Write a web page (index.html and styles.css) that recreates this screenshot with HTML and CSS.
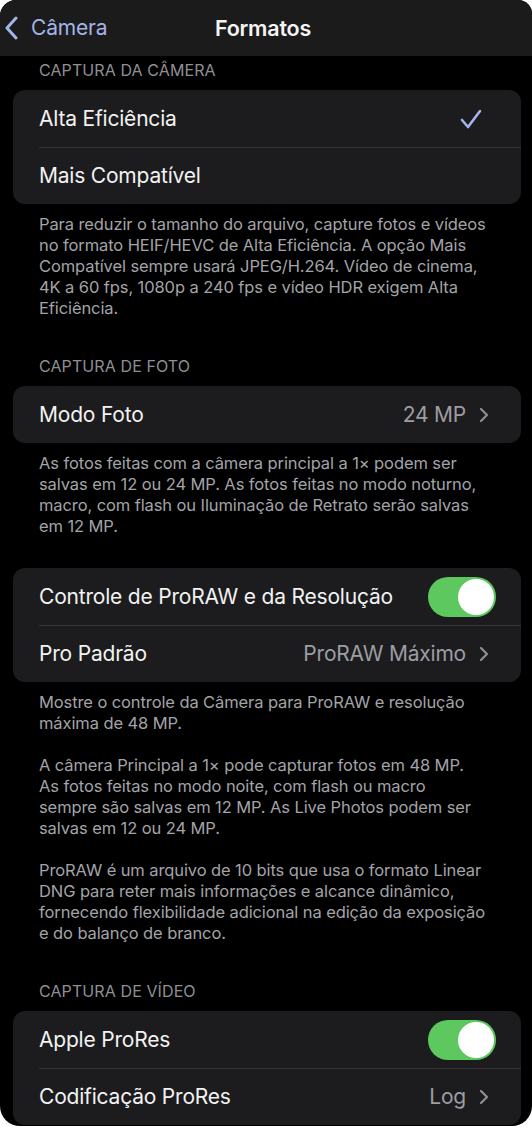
FILE: index.html
```html
<!DOCTYPE html>
<html lang="pt-BR">
<head>
<meta charset="utf-8">
<title>Formatos</title>
<link rel="stylesheet" href="styles.css">
</head>
<body>
<div class="frame">
  <header class="nav">
    <div class="back">
      <svg class="back-chev" width="14" height="24" viewBox="0 0 14 24"><path d="M12 2 L3 12 L12 22" fill="none" stroke="#a3b4e8" stroke-width="3" stroke-linecap="round" stroke-linejoin="round"/></svg>
      <span class="back-label">Câmera</span>
    </div>
    <h1 class="title">Formatos</h1>
  </header>

  <main class="content">
    <div class="sec-header first">CAPTURA DA CÂMERA</div>
    <div class="card">
      <div class="row">
        <span class="label">Alta Eficiência</span>
        <svg class="check" width="22" height="20" viewBox="0 0 22 20"><path d="M2 11 L8 18 L20 2" fill="none" stroke="#a3b4e8" stroke-width="2.6" stroke-linecap="round" stroke-linejoin="round"/></svg>
      </div>
      <div class="row">
        <span class="label">Mais Compatível</span>
      </div>
    </div>
    <div class="footer">
      <p>Para reduzir o tamanho do arquivo, capture fotos e vídeos<br>no formato HEIF/HEVC de Alta Eficiência. A opção Mais<br>Compatível sempre usará JPEG/H.264. Vídeo de cinema,<br>4K a 60 fps, 1080p a 240 fps e vídeo HDR exigem Alta<br>Eficiência.</p>
    </div>

    <div class="sec-header">CAPTURA DE FOTO</div>
    <div class="card">
      <div class="row">
        <span class="label">Modo Foto</span>
        <span class="value">24 MP<svg class="chev" width="10" height="16" viewBox="0 0 10 16"><path d="M2 2 L8 8 L2 14" fill="none" stroke="#8e8e93" stroke-width="2.2" stroke-linecap="round" stroke-linejoin="round"/></svg></span>
      </div>
    </div>
    <div class="footer">
      <p>As fotos feitas com a câmera principal a 1× podem ser<br>salvas em 12 ou 24 MP. As fotos feitas no modo noturno,<br>macro, com flash ou Iluminação de Retrato serão salvas<br>em 12 MP.</p>
    </div>

    <div class="card spaced">
      <div class="row">
        <span class="label">Controle de ProRAW e da Resolução</span>
        <span class="toggle"><span class="knob"></span></span>
      </div>
      <div class="row">
        <span class="label">Pro Padrão</span>
        <span class="value">ProRAW Máximo<svg class="chev" width="10" height="16" viewBox="0 0 10 16"><path d="M2 2 L8 8 L2 14" fill="none" stroke="#8e8e93" stroke-width="2.2" stroke-linecap="round" stroke-linejoin="round"/></svg></span>
      </div>
    </div>
    <div class="footer">
      <p>Mostre o controle da Câmera para ProRAW e resolução<br>máxima de 48 MP.</p>
      <p>A câmera Principal a 1× pode capturar fotos em 48 MP.<br>As fotos feitas no modo noite, com flash ou macro<br>sempre são salvas em 12 MP. As Live Photos podem ser<br>salvas em 12 ou 24 MP.</p>
      <p>ProRAW é um arquivo de 10 bits que usa o formato Linear<br>DNG para reter mais informações e alcance dinâmico,<br>fornecendo flexibilidade adicional na edição da exposição<br>e do balanço de branco.</p>
    </div>

    <div class="sec-header">CAPTURA DE VÍDEO</div>
    <div class="card">
      <div class="row">
        <span class="label">Apple ProRes</span>
        <span class="toggle"><span class="knob"></span></span>
      </div>
      <div class="row">
        <span class="label">Codificação ProRes</span>
        <span class="value">Log<svg class="chev" width="10" height="16" viewBox="0 0 10 16"><path d="M2 2 L8 8 L2 14" fill="none" stroke="#8e8e93" stroke-width="2.2" stroke-linecap="round" stroke-linejoin="round"/></svg></span>
      </div>
    </div>
  </main>
</div>
</body>
</html>
```

FILE: styles.css
```css
* { box-sizing: border-box; }
html, body { margin: 0; padding: 0; background: #ffffff; }
body { font-family: Inter, "Noto Sans", "Liberation Sans", sans-serif; }

.frame {
  width: 532px;
  height: 1126px;
  background: #000;
  border-radius: 16px 14px 20px 20px;
  overflow: hidden;
}

.nav {
  height: 56px;
  background: #1b1b1c;
  display: flex;
  align-items: center;
  justify-content: center;
  position: relative;
}
.back {
  position: absolute;
  left: 4px;
  top: 16px;
  display: flex;
  align-items: center;
  gap: 13px;
}
.back-chev { display: block; }
.back-label {
  color: #a3b4e8;
  font-size: 21px;
  letter-spacing: -0.2px;
  line-height: 24px;
}
.title {
  margin: 0 0 0 -6px;
  color: #f4f4f4;
  font-size: 21.5px;
  font-weight: 600;
  letter-spacing: -0.2px;
}

.content { padding: 0 11px 0 13px; }

.sec-header {
  color: #8f8f94;
  font-size: 16px;
  line-height: 18px;
  padding: 0 26px;
  margin: 38px 0 11px;
  letter-spacing: 0.1px;
}
.sec-header.first { margin-top: 5px; }

.card {
  background: #1c1c1e;
  border-radius: 12px;
  overflow: hidden;
}
.card.spaced { margin-top: 31px; }

.row {
  height: 57px;
  display: flex;
  align-items: center;
  justify-content: space-between;
  padding: 0 25px 0 26px;
  position: relative;
}
.row + .row::before {
  content: "";
  position: absolute;
  top: 0;
  left: 26px;
  right: 0;
  height: 1px;
  background: #333335;
}
.label {
  color: #f2f2f2;
  font-size: 21px;
  letter-spacing: -0.2px;
}
.value {
  color: #9d9da2;
  font-size: 21px;
  letter-spacing: -0.2px;
  display: flex;
  align-items: center;
  gap: 13px;
  padding-right: 7px;
}
.chev { display: block; }
.check { display: block; margin-right: 14px; }

.toggle {
  width: 68px;
  height: 40px;
  border-radius: 20px;
  background: #5cc85d;
  display: flex;
  align-items: center;
  justify-content: flex-end;
  padding: 2px;
}
.knob {
  width: 36px;
  height: 36px;
  border-radius: 50%;
  background: #ffffff;
}

.footer {
  color: #a3a3a8;
  font-size: 16.5px;
  line-height: 21px;
  padding: 10px 26px 0;
  letter-spacing: -0.1px;
}
.footer p { margin: 0 0 21px; }
.footer p:last-child { margin-bottom: 0; }
```
